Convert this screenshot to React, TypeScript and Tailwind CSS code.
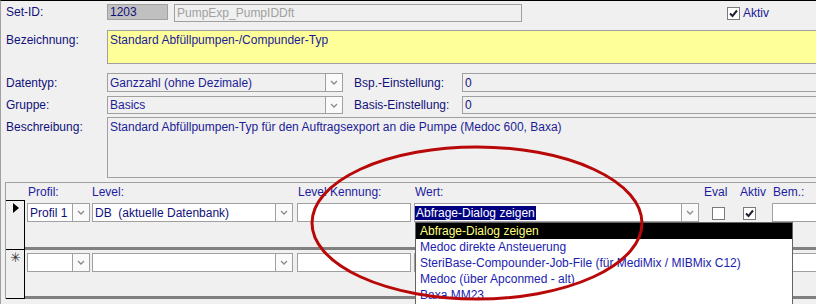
import type { ReactNode } from 'react'

const LIST_ITEMS = [
  'Abfrage-Dialog zeigen',
  'Medoc direkte Ansteuerung',
  'SteriBase-Compounder-Job-File (für MediMix / MIBMix C12)',
  'Medoc (über Apconmed - alt)',
  'Baxa MM23',
]

function Chevron() {
  return (
    <svg width="8" height="5" viewBox="0 0 8 5">
      <path d="M1 1 L4 4 L7 1" fill="none" stroke="#8a8a8a" strokeWidth="1.3" />
    </svg>
  )
}

interface ComboProps {
  className: string
  children?: ReactNode
  pad?: string
}

function Combo({ className, children, pad = 'pl-[2px]' }: ComboProps) {
  return (
    <div className={`flex bg-white border border-[#a0a0a0] ${className}`}>
      <div className={`flex-1 flex items-center overflow-hidden whitespace-pre ${pad}`}>{children}</div>
      <div className="w-[17px] flex items-center justify-center border-l border-[#a0a0a0] bg-[#fafafa]">
        <Chevron />
      </div>
    </div>
  )
}

function Check({ checked }: { checked?: boolean }) {
  return (
    <div className="w-[13px] h-[13px] bg-white border border-[#7a7a7a] flex items-center justify-center">
      {checked && (
        <svg width="11" height="11" viewBox="0 0 11 11">
          <path d="M2 5.5 L4.5 8 L9 2.5" fill="none" stroke="#1f2430" strokeWidth="2" />
        </svg>
      )}
    </div>
  )
}

function RecordRow({ first }: { first?: boolean }) {
  return (
    <div className={`flex ${first ? 'h-[50px]' : 'h-[49px]'}`}>
      <div
        className={`w-[19px] border-r border-b border-black flex justify-center ${
          first ? 'border-t' : ''
        }`}
      >
        {first ? (
          <svg width="8" height="12" viewBox="0 0 8 12" className="mt-[1px] ml-[1px]">
            <path d="M1 1 L7 6 L1 11 Z" fill="#000" />
          </svg>
        ) : (
          <span className="text-[13px] leading-[14px] mt-[1px] text-[#333]">✳</span>
        )}
      </div>
      <div className="flex-1 flex items-start pt-[3px] border-b-[3px] border-[#808080]">
        <Combo className="ml-[2px] w-[63px] h-[19px]">{first ? 'Profil 1' : ''}</Combo>
        <Combo className="ml-[2px] w-[201px] h-[19px]">{first ? 'DB  (aktuelle Datenbank)' : ''}</Combo>
        <div className="ml-[4px] w-[114px] h-[19px] bg-white border border-[#a0a0a0]" />
        <Combo className="ml-[3px] w-[285px] h-[19px]" pad="pl-0">
          {first && <span className="bg-[#000080] text-white leading-[14px] px-[1px]">Abfrage-Dialog zeigen</span>}
        </Combo>
        <div className="ml-[13px] mt-[4px]">
          <Check />
        </div>
        <div className="ml-[18px] mt-[4px]">
          <Check checked={first} />
        </div>
        <div className="ml-[16px] flex-1 h-[19px] bg-white border border-r-0 border-[#a0a0a0]" />
      </div>
    </div>
  )
}

export default function App() {
  return (
    <div className="relative w-[816px] h-[304px] overflow-hidden bg-[#f0f0f0] border-t border-t-black border-l border-l-[#a0a0a0] font-['Liberation_Sans',Arial,sans-serif] text-[12px] text-[#10107a]">
      {/* Set-ID */}
      <div className="flex items-start h-[18px] mt-[3px]">
        <div className="w-[106px] pl-[5px] leading-[16px]">Set-ID:</div>
        <div className="w-[61px] h-[16px] bg-[#c0c0c0] border border-[#a0a0a0] pl-[2px] leading-[14px]">1203</div>
        <div className="ml-[6px] w-[348px] h-[18px] border border-[#a0a0a0] pl-[2px] leading-[16px] text-[#a0a0a0]">
          PumpExp_PumpIDDft
        </div>
        <div className="ml-[205px] mt-[3px] flex items-center gap-[3px]">
          <Check checked />
          <span className="leading-[13px] text-[#1a1a9a]">Aktiv</span>
        </div>
      </div>

      {/* Bezeichnung */}
      <div className="flex mt-[8px]">
        <div className="w-[106px] pl-[5px] pt-[3px] leading-[14px]">Bezeichnung:</div>
        <div className="flex-1 h-[34px] bg-[#ffff99] border border-r-0 border-[#a0a0a0] pl-[2px] pt-[2px] leading-[14px] text-[#1c1c96]">
          Standard Abfüllpumpen-/Compunder-Typ
        </div>
      </div>

      {/* Datentyp */}
      <div className="flex items-center mt-[9px] h-[19px]">
        <div className="w-[106px] pl-[5px]">Datentyp:</div>
        <Combo className="w-[236px] h-[19px] !bg-[#f0f0f0] text-[#1c1c96]">Ganzzahl (ohne Dezimale)</Combo>
        <div className="w-[119px] pl-[11px]">Bsp.-Einstellung:</div>
        <div className="flex-1 h-[19px] border border-r-0 border-[#a0a0a0] pl-[2px] flex items-center">0</div>
      </div>

      {/* Gruppe */}
      <div className="flex items-center mt-[4px] h-[18px]">
        <div className="w-[106px] pl-[5px]">Gruppe:</div>
        <Combo className="w-[236px] h-[18px] !bg-[#f0f0f0] text-[#1c1c96]">Basics</Combo>
        <div className="w-[119px] pl-[11px]">Basis-Einstellung:</div>
        <div className="flex-1 h-[18px] border border-r-0 border-[#a0a0a0] pl-[2px] flex items-center">0</div>
      </div>

      {/* Beschreibung */}
      <div className="flex mt-[3px]">
        <div className="w-[106px] pl-[5px] pt-[3px] leading-[14px]">Beschreibung:</div>
        <div className="flex-1 h-[61px] border border-r-0 border-[#a0a0a0] pl-[2px] pt-[2px] leading-[14px] text-[#1c1c96]">
          Standard Abfüllpumpen-Typ für den Auftragsexport an die Pumpe (Medoc 600, Baxa)
        </div>
      </div>

      {/* Unterformular */}
      <div className="mt-[4px] ml-[4px] border-t border-l border-[#a0a0a0]">
        <div className="flex items-center h-[17px] pl-[22px] text-[#1c1ca0]">
          <div className="w-[64px]">Profil:</div>
          <div className="w-[206px]">Level:</div>
          <div className="w-[117px]">Level Kennung:</div>
          <div className="w-[289px]">Wert:</div>
          <div className="w-[36px]">Eval</div>
          <div className="w-[33px]">Aktiv</div>
          <div>Bem.:</div>
        </div>
        <RecordRow first />
        <RecordRow />
      </div>

      {/* offene Auswahlliste */}
      <div className="absolute left-[414px] top-[221px] w-[378px] h-[100px] bg-white border border-[#646464]">
        {LIST_ITEMS.map((item, i) => (
          <div
            key={item}
            className={`h-[16px] leading-[16px] pl-[4px] whitespace-nowrap ${
              i === 0 ? 'bg-black text-[#ffff80]' : 'text-[#1c1cb0]'
            }`}
          >
            {item}
          </div>
        ))}
      </div>

      {/* Markierung */}
      <svg className="absolute left-0 top-0 pointer-events-none" width="816" height="304" viewBox="0 0 816 304">
        <ellipse cx="476" cy="222" rx="165" ry="76" fill="none" stroke="#b80808" strokeWidth="3" />
      </svg>
    </div>
  )
}
